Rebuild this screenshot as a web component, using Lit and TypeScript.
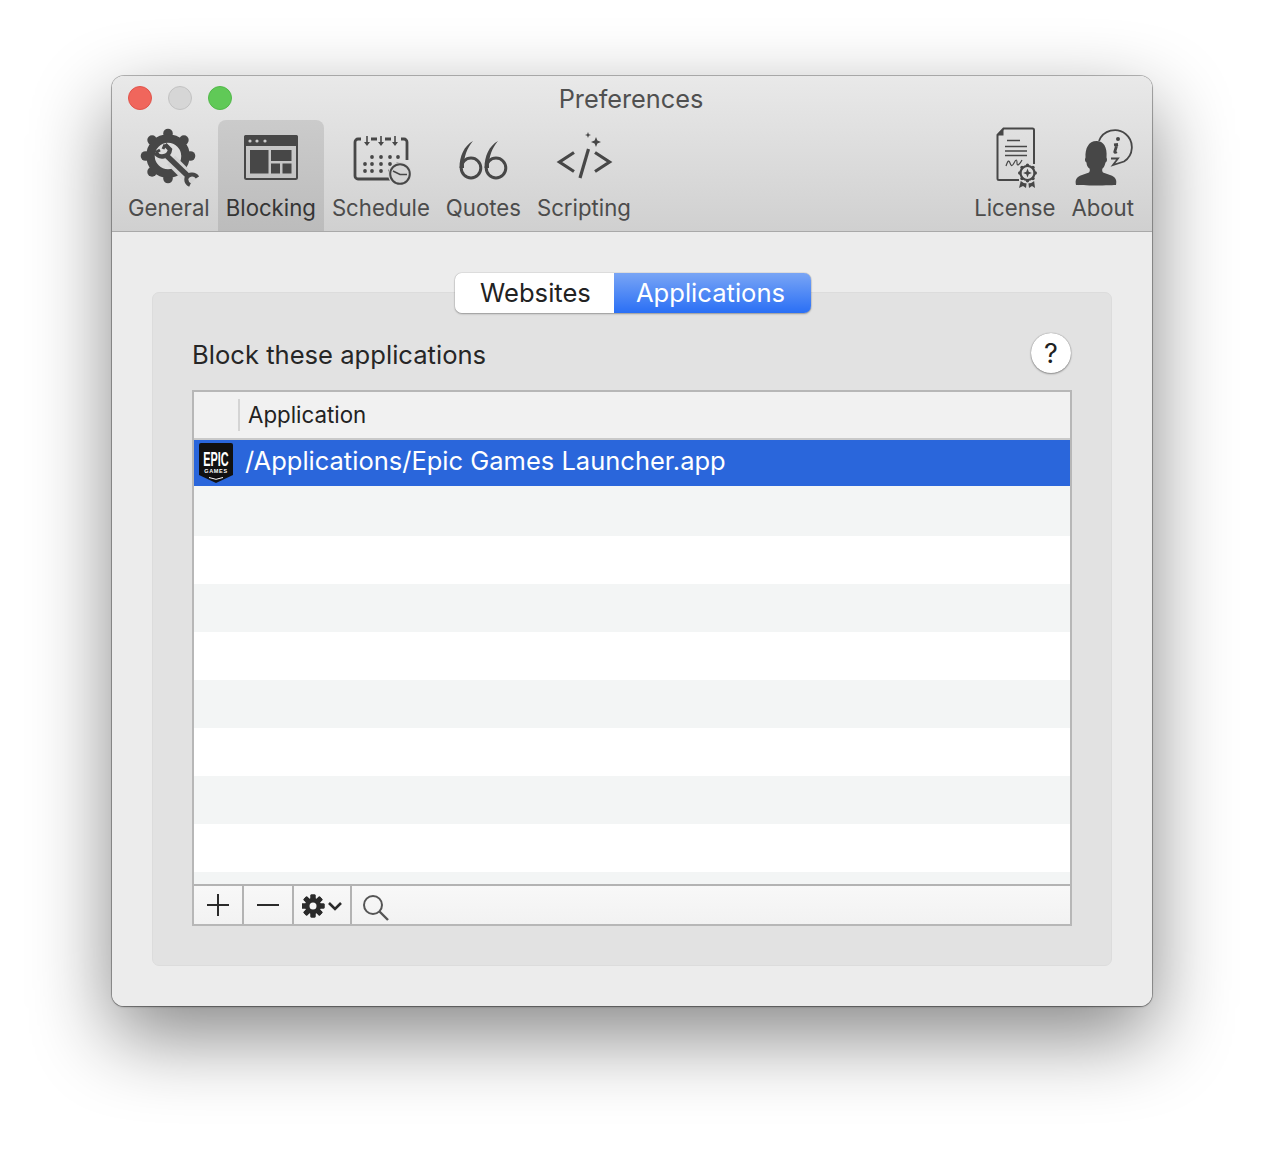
import { LitElement, html, css, svg } from "lit";
import { customElement } from "lit/decorators.js";

const D = "#474747";

const ico = (w: number, h: number, vb: string, body: unknown) =>
  html`<svg width=${w} height=${h} viewBox=${vb} fill="none">${body}</svg>`;

const teeth = [0, 45, 90, 135, 180, 225, 270, 315];

const gear = ico(60, 68, "139 126 60 68", svg`
  ${teeth.map((a) => {
    const r = ((a + 0) * Math.PI) / 180;
    return svg`<circle cx=${168 + 22.5 * Math.cos(r)} cy=${156 + 22.5 * Math.sin(r)} r="4.8" fill=${D}/>`;
  })}
  <circle cx="168" cy="156" r="17.5" stroke=${D} stroke-width="8.5"/>
  <path d="M171 160L193 182" stroke="#d3d3d3" stroke-width="12"/>
  <path d="M167 156L189 177" stroke=${D} stroke-width="5.4"/>
  <path d="M155.500 152.500A7.800 7.800 0 0 0 170 149.500L165 144.500" stroke=${D} stroke-width="4.4"/>
  <path d="M155.500 152.500L160 150M165 144.500L163 149" stroke=${D} stroke-width="3"/>
  <path d="M197.500 177.500A6.300 6.300 0 0 0 186.500 178A6.300 6.300 0 0 0 190 185" stroke=${D} stroke-width="4"/>
`);

const blocking = ico(54, 50, "244 135 54 50", svg`
  <rect x="245" y="136" width="52" height="43" rx="1.5" stroke=${D} stroke-width="2"/>
  <path d="M244 146V137a2 2 0 0 1 2-2h50a2 2 0 0 1 2 2v9z" fill=${D}/>
  <circle cx="250" cy="141" r="1.6" fill="#ccc"/><circle cx="257" cy="141" r="1.6" fill="#ccc"/><circle cx="265" cy="141" r="1.6" fill="#ccc"/>
  <rect x="250" y="150" width="18.5" height="23.5" fill=${D}/>
  <rect x="271" y="150" width="20.5" height="11" fill=${D}/>
  <rect x="271" y="163.5" width="9" height="10" fill=${D}/>
  <rect x="282.5" y="163.5" width="9" height="10" fill=${D}/>
`);

const dots: [number, number][] = [
  [372, 157], [381, 157], [390, 157], [398, 157],
  [365, 164], [372, 164], [381, 164], [390, 164], [398, 164],
  [365, 171], [372, 171], [381, 171], [390, 171],
];
const schedule = ico(60, 50, "351 135 60 50", svg`
  <path d="M361 139h-3a3 3 0 0 0-3 3v34a3 3 0 0 0 3 3h33M407 160v-18a3 3 0 0 0-3-3h-3" stroke=${D} stroke-width="2.8"/>
  <path d="M371 139h6M385 139h6" stroke=${D} stroke-width="2.8"/>
  <path d="M367 136v7M381 136v7M395 136v7" stroke=${D} stroke-width="1.6"/>
  <path d="M364 142l3 4 3-4zM378 142l3 4 3-4zM392 142l3 4 3-4z" fill=${D}/>
  ${dots.map(([x, y]) => svg`<circle cx=${x} cy=${y} r="1.9" fill=${D}/>`)}
  <circle cx="400" cy="174" r="12" fill="#d4d4d4"/>
  <circle cx="400" cy="174" r="9.8" stroke=${D} stroke-width="2"/>
  <path d="M393 171l7 3.5h7" stroke=${D} stroke-width="1.6"/>
`);

const six = (x: number) => svg`
  <g transform="translate(${x} 0)">
    <ellipse cx="472" cy="168" rx="9.800" ry="10" stroke=${D} stroke-width="3"/>
    <path d="M474 141C465 146 460.500 156 460.500 168L465 168C464.500 157 468 148 474 141z" fill=${D}/>
  </g>`;
const quotes = ico(50, 42, "459 139 50 42", svg`${six(0)}${six(25)}`);

const star = (cx: number, cy: number, r: number) =>
  `M${cx} ${cy - r}L${cx + r * 0.28} ${cy - r * 0.28}L${cx + r} ${cy}L${cx + r * 0.28} ${cy + r * 0.28}L${cx} ${cy + r}L${cx - r * 0.28} ${cy + r * 0.28}L${cx - r} ${cy}L${cx - r * 0.28} ${cy - r * 0.28}z`;
const scripting = ico(58, 56, "556 132 58 56", svg`
  <path d="M575 152.5L560.5 162L575 171.5" stroke=${D} stroke-width="3.2"/>
  <path d="M596 152.5L610.5 162L596 171.5" stroke=${D} stroke-width="3.2"/>
  <path d="M581 178L589.5 149" stroke=${D} stroke-width="3.2"/>
  <path d=${star(597, 142, 5)} fill=${D}/>
  <path d=${star(589, 135, 3)} fill=${D}/>
`);

const license = ico(44, 66, "992 127 44 66", svg`
  <path d="M1018 180H998a1.5 1.5 0 0 1-1.5-1.5V135l6-6.5h29a1.5 1.500 0 0 1 1.500 1.500v34" stroke=${D} stroke-width="2"/>
  <path d="M996.500 135.500h6v-7z" fill=${D}/>
  <path d="M1006 140.500h13M1004 146.500h22M1004 151h22M1004 155.500h22" stroke=${D} stroke-width="1.600"/>
  <path d="M1005 166c2-6 3-6 4-3s2 4 4 0 3-4 3 0 3 1 5-3" stroke=${D} stroke-width="1.200"/>
  <path d="M1020 180l-2 8 4-2 3 2 1-8zM1033 180l1 8-3-2-3 2-1-8z" fill=${D}/>
  <circle cx="1026.500" cy="173" r="10.500" fill="#dcdcdc"/>
  ${teeth.map((a) => {
    const r = (a * Math.PI) / 180;
    return svg`<circle cx=${1026.5 + 7.8 * Math.cos(r)} cy=${173 + 7.8 * Math.sin(r)} r="1.700" fill=${D}/>`;
  })}
  <circle cx="1026.500" cy="173" r="7" stroke=${D} stroke-width="2.200"/>
  <path d=${star(1026.5, 173, 4.4)} fill=${D}/>
`);

const about = ico(60, 66, "1073 127 60 66", svg`
  <path d="M1099 141A17 17 0 1 1 1124 161.500L1113 165L1118 158.500L1111 158.500" stroke=${D} stroke-width="1.800" fill="none"/>
  <path d="M1117 144.500l-2.200 7q-.3 1.500 2 .2M1118 144.500l-4 .4" stroke=${D} stroke-width="2.800"/>
  <circle cx="1118" cy="139" r="2" fill=${D}/>
  <path d="M1076 185c-1-5 0-8 6-10l7-2.500c1-1 1-3 .5-4-2-1-3-4-3-6-1.500-.500-2-3-1-5-.5-9 3-16.500 11-16.500 7 0 11 6 10 16.500 1 2 .5 4.500-1 5-.5 2-1.500 5-3 6-.5 1-.5 3 .5 4l7 2.500c6 2 7 5 6 10 0 0-12 .5-20 .5s-20-.5-20-.5z" fill=${D}/>
`);

const epic = html`<svg class="epic" width="36" height="40" viewBox="0 0 36 40">
  <path d="M3 0h30a2 2 0 0 1 2 2v30l-17 8-17-8V2a2 2 0 0 1 2-2z" fill="#111"/>
  <g transform="translate(18 23) scale(.52 1)"><text text-anchor="middle" font-family="Liberation Sans, sans-serif" font-weight="700" font-size="21" fill="#fff">EPIC</text></g>
  <text x="18" y="30" text-anchor="middle" font-family="Liberation Sans, sans-serif" font-weight="700" font-size="5.500" letter-spacing=".7" fill="#fff">GAMES</text>
  <path d="M11 34.500l7 1.800 7-1.800" stroke="#fff" stroke-width="1"/>
</svg>`;

const plus = html`<svg width="24" height="24" viewBox="0 0 24 24"><path d="M1 12h22M12 1v22" stroke="#2a2a2a" stroke-width="2"/></svg>`;
const minus = html`<svg width="24" height="24" viewBox="0 0 24 24"><path d="M1 12h22" stroke="#2a2a2a" stroke-width="2"/></svg>`;
const smallGear = html`<svg class="sg" width="42" height="24" viewBox="0 0 42 24">
  ${teeth.map((a) => svg`<rect x="8.500" y="0.500" width="5" height="23" rx="1" fill="#2a2a2a" transform="rotate(${a} 11 12)"/>`)}
  <circle cx="11" cy="12" r="8" fill="#2a2a2a"/><circle cx="11" cy="12" r="3.500" fill="#f6f6f6"/>
  <path d="M27 9l6 6 6-6" stroke="#2a2a2a" stroke-width="2.600" fill="none"/>
</svg>`;
const search = html`<svg width="28" height="28" viewBox="0 0 28 28"><circle cx="11" cy="11" r="9" stroke="#555" stroke-width="2" fill="none"/><path d="M17.500 17.500L26 26" stroke="#555" stroke-width="2.400"/></svg>`;

const left = [
  { label: "General", icon: gear },
  { label: "Blocking", icon: blocking, active: true },
  { label: "Schedule", icon: schedule },
  { label: "Quotes", icon: quotes },
  { label: "Scripting", icon: scripting },
];
const right = [
  { label: "License", icon: license },
  { label: "About", icon: about },
];

@customElement("app-root")
export class AppRoot extends LitElement {
  static styles = css`
    :host { display: block; height: 1154px; box-sizing: border-box; padding: 76px 112px 0; background: #fff;
      font-family: Inter, "Liberation Sans", sans-serif; }
    .win { width: 1040px; height: 930px; border-radius: 12px; background: #ececec; overflow: hidden; }
    .shadow { width: 1040px; height: 930px; border-radius: 12px;
      box-shadow: 0 30px 80px rgba(0,0,0,.48), 0 0 0 1px rgba(0,0,0,.26), 0 1px 2px rgba(0,0,0,.3); }
    .chrome { height: 156px; box-sizing: border-box; border-bottom: 1px solid #a9a9a9;
      background: linear-gradient(#e9e9e9, #d0d0d0); display: flex; flex-direction: column; }
    .titlebar { height: 44px; flex: none; display: flex; align-items: center; position: relative; padding-left: 16px; gap: 16px; }
    .light { width: 24px; height: 24px; border-radius: 50%; box-sizing: border-box; border: 1px solid; }
    .red { background: #f0665c; border-color: #e0544b; }
    .gray { background: #d6d6d6; border-color: #c2c2c2; }
    .green { background: #60c957; border-color: #52b84a; }
    .title { position: absolute; inset: 0 2px 0 0; display: flex; align-items: center; justify-content: center;
      font-size: 25.300px; color: #505050; }
    .tools { flex: 1; display: flex; justify-content: space-between; padding: 0 10px 0 8px; min-height: 0; }
    .group { display: flex; }
    .tool { position: relative; padding: 0 8px; display: flex; flex-direction: column; align-items: center;
      color: #4c4c4c; font-size: 22.200px; line-height: 28px; }
    .tool.active { background: linear-gradient(#cbcbcb, #bcbcbc); border-radius: 8px 8px 0 0; color: #353535; }
    .icon { height: 74px; box-sizing: border-box; padding-top: 6px; display: flex; align-items: center; justify-content: center; }
    .icon svg { display: block; flex: none; }
    .label { white-space: nowrap; }
    .content { padding: 41px 40px 0; }
    .seg { display: flex; width: 356px; height: 40px; margin: 0 0 -21px 303px; position: relative; z-index: 1;
      border-radius: 7px; overflow: hidden; box-shadow: 0 0 1px rgba(0,0,0,.5), 0 1px 2px rgba(0,0,0,.3);
      font-size: 25.600px; }
    .seg div { display: flex; align-items: center; justify-content: center; padding-bottom: 2px; box-sizing: border-box; }
    .seg .a { width: 159px; background: #fff; color: #222; padding-left: 2px; }
    .seg .b { flex: 1; color: #fff; background: linear-gradient(#79a5f5, #2a6ff5); padding-right: 4px; }
    .panel { height: 674px; box-sizing: border-box; background: #e2e2e2; border: 1px solid #dcdcdc; border-radius: 7px; padding: 20px 39px 0; }
    .head { height: 77px; display: flex; align-items: flex-start; justify-content: space-between; }
    .head h2 { margin: 25px 0 0; font-weight: 400; font-size: 25.600px; line-height: 34px; color: #262626; }
    .help { width: 40px; height: 40px; border-radius: 50%; background: #fff; margin: 20px 1px 0 0; font-size: 27px; color: #222;
      display: flex; align-items: center; justify-content: center; box-shadow: 0 0 1px rgba(0,0,0,.5), 0 1px 2px rgba(0,0,0,.35); }
    .table { border: 2px solid #b7b7b7; height: 536px; box-sizing: border-box; background: #fff; display: flex; flex-direction: column; }
    .th { flex: none; display: flex; align-items: center; background: #f1f1f1; box-sizing: border-box; border-bottom: 2px solid #c9c9c9; height: 48px; font-size: 22.300px; color: #222; }
    .th span { margin-left: 44px; border-left: 2px solid #d4d4d4; padding-left: 8px; height: 32px; line-height: 31px; }
    .sel { height: 46px; flex: none; background: #2a66db; color: #fff; display: flex; align-items: center; font-size: 25.500px; padding-left: 4px; gap: 11px; }
    .sel span { padding-bottom: 6px; }
    .epic { flex: none; }
    .rows { flex: 1; min-height: 0; overflow: hidden; }
    .row { height: 48px; }
    .row.first { height: 50px; }
    .row.g { background: #f3f5f5; }
    .foot { height: 40px; flex: none; box-sizing: border-box; border-top: 2px solid #b3b3b3; background: linear-gradient(#f8f8f8, #f2f2f2); display: flex; }
    .cell { display: flex; align-items: center; justify-content: center; box-sizing: border-box; border-right: 2px solid #b3b3b3; }
    .cell svg { display: block; }
    .c1 { width: 50px; } .c2 { width: 50px; } .c3 { width: 58px; padding: 2px 0 0 2px; }
    .c4 { padding: 5px 0 0 10px; border: 0; }
  `;

  render() {
    const tool = (t: { label: string; icon: unknown; active?: boolean }) => html`
      <div class="tool ${t.active ? "active" : ""}">
        <div class="icon">${t.icon}</div>
        <div class="label">${t.label}</div>
      </div>`;
    const rows = [0, 1, 2, 3, 4, 5, 6, 7, 8];
    return html`
      <div class="shadow"><div class="win">
        <div class="chrome">
          <div class="titlebar">
            <div class="title">Preferences</div>
            <div class="light red"></div><div class="light gray"></div><div class="light green"></div>
          </div>
          <div class="tools">
            <div class="group">${left.map(tool)}</div>
            <div class="group">${right.map(tool)}</div>
          </div>
        </div>
        <div class="content">
          <div class="seg"><div class="a">Websites</div><div class="b">Applications</div></div>
          <div class="panel">
            <div class="head"><h2>Block these applications</h2><div class="help">?</div></div>
            <div class="table">
              <div class="th"><span>Application</span></div>
              <div class="sel">${epic}<span>/Applications/Epic Games Launcher.app</span></div>
              <div class="rows">${rows.map((i) => html`<div class="row ${i === 0 ? "first" : ""} ${i % 2 === 0 ? "g" : ""}"></div>`)}</div>
              <div class="foot">
                <div class="cell c1">${plus}</div>
                <div class="cell c2">${minus}</div>
                <div class="cell c3">${smallGear}</div>
                <div class="cell c4">${search}</div>
              </div>
            </div>
          </div>
        </div>
      </div></div>`;
  }
}
